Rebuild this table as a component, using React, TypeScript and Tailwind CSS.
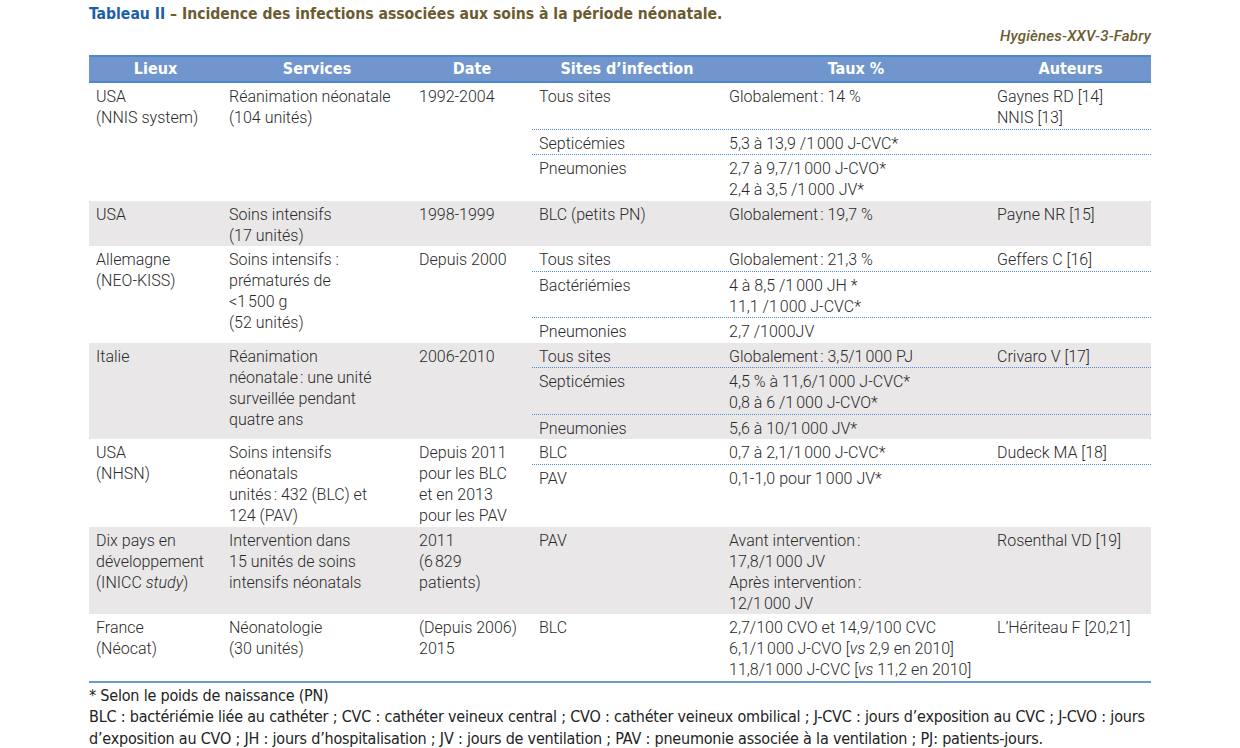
import React, { ReactNode } from "react";

type Sub = { site: ReactNode; taux: ReactNode; auteurs?: ReactNode };
type Row = {
  lieux: ReactNode;
  services: ReactNode;
  date: ReactNode;
  subs: Sub[];
  gray?: boolean;
};

const nb = "\u202F";
const condensed = { fontFamily: "'DejaVu Sans Condensed', 'Liberation Sans', sans-serif" };

const rows: Row[] = [
  {
    lieux: <>USA<br />(NNIS system)</>,
    services: <>Réanimation néonatale<br />(104 unités)</>,
    date: "1992-2004",
    subs: [
      { site: "Tous sites", taux: `Globalement${nb}: 14 %`, auteurs: <>Gaynes RD [14]<br />NNIS [13]</> },
      { site: "Septicémies", taux: `5,3 à 13,9 /1${nb}000 J-CVC*` },
      { site: "Pneumonies", taux: <>2,7 à 9,7/1{nb}000 J-CVO*<br />2,4 à 3,5 /1{nb}000 JV*</> },
    ],
  },
  {
    gray: true,
    lieux: "USA",
    services: <>Soins intensifs<br />(17 unités)</>,
    date: "1998-1999",
    subs: [{ site: "BLC (petits PN)", taux: `Globalement${nb}: 19,7 %`, auteurs: "Payne NR [15]" }],
  },
  {
    lieux: <>Allemagne<br />(NEO-KISS)</>,
    services: <>Soins intensifs :<br />prématurés de<br />&lt;1{nb}500 g<br />(52 unités)</>,
    date: "Depuis 2000",
    subs: [
      { site: "Tous sites", taux: `Globalement${nb}: 21,3 %`, auteurs: "Geffers C [16]" },
      { site: "Bactériémies", taux: <>4 à 8,5 /1{nb}000 JH *<br />11,1 /1{nb}000 J-CVC*</> },
      { site: "Pneumonies", taux: "2,7 /1000JV" },
    ],
  },
  {
    gray: true,
    lieux: "Italie",
    services: <>Réanimation<br />néonatale{nb}: une unité<br />surveillée pendant<br />quatre ans</>,
    date: "2006-2010",
    subs: [
      { site: "Tous sites", taux: `Globalement${nb}: 3,5/1${nb}000 PJ`, auteurs: "Crivaro V [17]" },
      { site: "Septicémies", taux: <>4,5 % à 11,6/1{nb}000 J-CVC*<br />0,8 à 6 /1{nb}000 J-CVO*</> },
      { site: "Pneumonies", taux: `5,6 à 10/1${nb}000 JV*` },
    ],
  },
  {
    lieux: <>USA<br />(NHSN)</>,
    services: <>Soins intensifs<br />néonatals<br />unités{nb}: 432 (BLC) et<br />124 (PAV)</>,
    date: <>Depuis 2011<br />pour les BLC<br />et en 2013<br />pour les PAV</>,
    subs: [
      { site: "BLC", taux: `0,7 à 2,1/1${nb}000 J-CVC*`, auteurs: "Dudeck MA [18]" },
      { site: "PAV", taux: `0,1-1,0 pour 1${nb}000 JV*` },
    ],
  },
  {
    gray: true,
    lieux: <>Dix pays en<br />développement<br />(INICC <i>study</i>)</>,
    services: <>Intervention dans<br />15 unités de soins<br />intensifs néonatals</>,
    date: <>2011<br />(6{nb}829<br />patients)</>,
    subs: [
      {
        site: "PAV",
        taux: <>Avant intervention{nb}:<br />17,8/1{nb}000 JV<br />Après intervention{nb}:<br />12/1{nb}000 JV</>,
        auteurs: "Rosenthal VD [19]",
      },
    ],
  },
  {
    lieux: <>France<br />(Néocat)</>,
    services: <>Néonatologie<br />(30 unités)</>,
    date: <>(Depuis 2006)<br />2015</>,
    subs: [
      {
        site: "BLC",
        taux: (
          <>
            2,7/100 CVO et 14,9/100 CVC<br />
            6,1/1{nb}000 J-CVO [<i>vs</i> 2,9 en 2010]<br />
            11,8/1{nb}000 J-CVC [<i>vs</i> 11,2 en 2010]
          </>
        ),
        auteurs: "L’Hériteau F [20,21]",
      },
    ],
  },
];

const cell = "pl-[7px] pr-1 pt-[3px] pb-[0.5px]";
const dotted = "border-t border-dotted border-[#4f8bd0]";

export default function App() {
  return (
    <div
      className="w-[1240px] h-[748px] bg-white text-[#2a2a2a] pl-[89px] pt-[4px] overflow-hidden"
      style={{ fontFamily: "Roboto, 'Liberation Sans', sans-serif" }}
    >
      <div className="w-[1062px]">
        <h1 className="text-[15.6px] font-bold leading-[20px] text-[#6b5b30]" style={condensed}>
          <span className="text-[#1c5fa8]">Tableau II</span> – Incidence des infections associées aux soins à la période néonatale.
        </h1>
        <p className="text-right italic text-[15px] leading-[20px] mt-[2px] text-[#6b5b30] font-medium tracking-[0.2px]">
          Hygiènes-XXV-3-Fabry
        </p>

        <div className="mt-[9px] text-[16px] leading-[21px] font-light">
          <div
            className="grid grid-cols-[133px_190px_120px_190px_268px_161px] bg-[#7196cd] border-t-2 border-b-2 border-[#4f88c8] text-white font-bold text-[16px] leading-[24px] text-center"
            style={condensed}
          >
            {["Lieux", "Services", "Date", "Sites d’infection", "Taux %", "Auteurs"].map((h) => (
              <div key={h}>{h}</div>
            ))}
          </div>

          {rows.map((r, i) => (
            <div
              key={i}
              className={`grid grid-cols-[133px_190px_120px_619px] ${r.gray ? "bg-[#e9e7e8]" : "bg-white"}`}
            >
              <div className={cell}>{r.lieux}</div>
              <div className={cell}>{r.services}</div>
              <div className={cell}>{r.date}</div>
              <div className="flex flex-col">
                {r.subs.map((s, j) => (
                  <div
                    key={j}
                    className={`grid grid-cols-[190px_268px_161px] ${j > 0 ? dotted : ""} ${
                      j === r.subs.length - 1 ? "flex-1" : ""
                    }`}
                  >
                    <div className={cell}>{s.site}</div>
                    <div className={cell}>{s.taux}</div>
                    <div className={cell}>{s.auteurs}</div>
                  </div>
                ))}
              </div>
            </div>
          ))}
        </div>

        <div
          className="border-t-2 border-[#6a9ad0] pt-[2px] text-[16px] leading-[21.5px] tracking-[-0.2px] text-[#222]"
          style={condensed}
        >
          <p>* Selon le poids de naissance (PN)</p>
          <p>
            BLC : bactériémie liée au cathéter ; CVC : cathéter veineux central ; CVO : cathéter veineux ombilical ; J-CVC : jours d’exposition au CVC ; J-CVO : jours d’exposition au CVO ; JH : jours d’hospitalisation ; JV : jours de ventilation ; PAV : pneumonie associée à la ventilation ; PJ: patients-jours.
          </p>
        </div>
      </div>
    </div>
  );
}
